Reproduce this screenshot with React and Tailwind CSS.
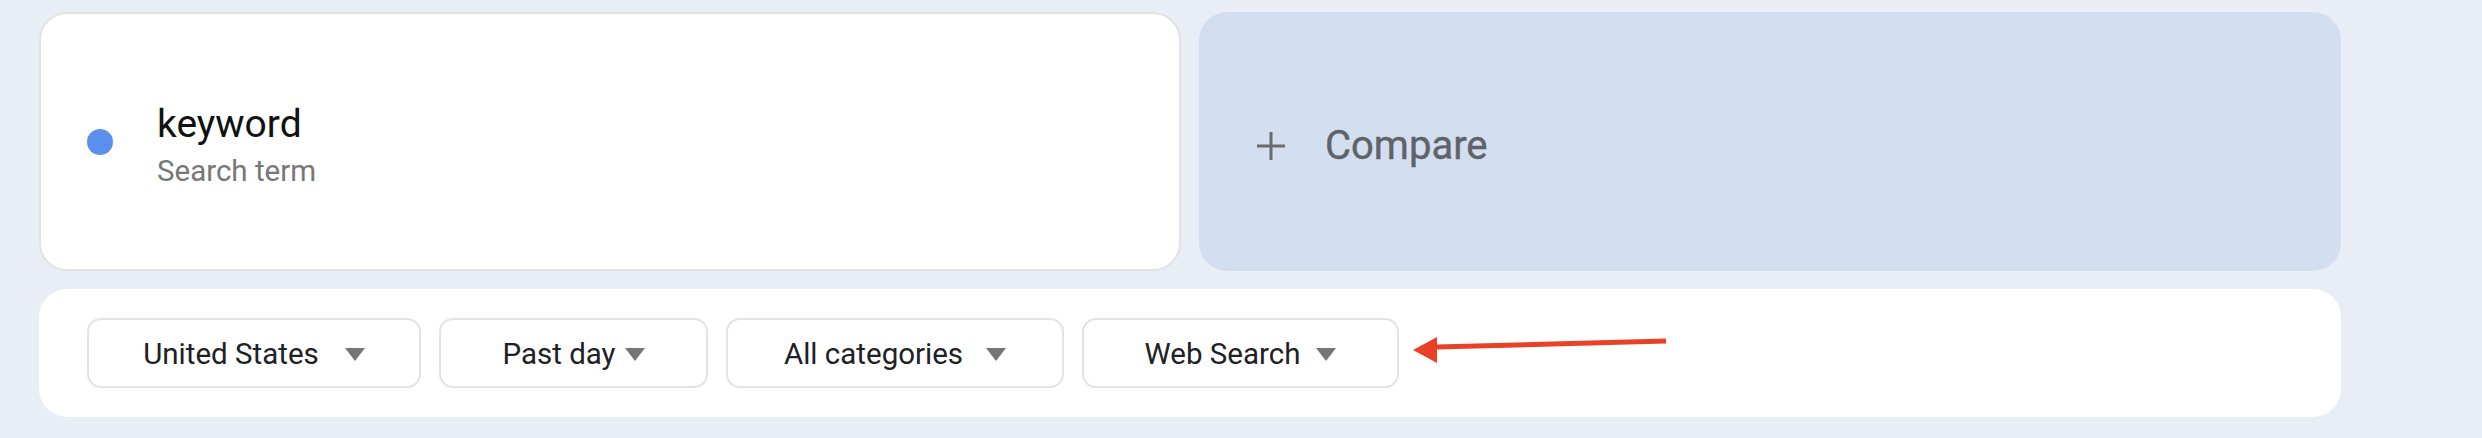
import { useState } from 'react';

const filters = [
  { label: 'United States', width: 'w-[334px]', gap: 'gap-[26px]' },
  { label: 'Past day', width: 'w-[269px]', gap: 'gap-[9px]' },
  { label: 'All categories', width: 'w-[338px]', gap: 'gap-[23px]' },
  { label: 'Web Search', width: 'w-[317px]', gap: 'gap-[16px]' },
];

function Caret() {
  return (
    <svg width="20" height="13" viewBox="0 0 20 13" className="flex-none">
      <path d="M0 0 H20 L10 13 Z" fill="#757575" />
    </svg>
  );
}

function FilterButton({ label, width, gap }) {
  return (
    <button
      className={`flex h-[70px] ${width} ${gap} items-center justify-center rounded-[14px] border-2 border-[#e3e3e3] bg-white pt-[3px] text-[29.5px] text-[#202124]`}
    >
      <span>{label}</span>
      <Caret />
    </button>
  );
}

export default function App() {
  const [term] = useState('keyword');

  return (
    <div className="min-h-[438px] w-full bg-[#e9edf6] font-['Roboto',sans-serif]">
      <div className="ml-[39px] flex w-[2302px] flex-col gap-[18px] pt-[12px]">
        {/* term + compare */}
        <div className="grid h-[259px] grid-cols-2 gap-[18px]">
          <div className="flex items-center gap-[44px] rounded-[28px] border-2 border-[#e2e2e2] bg-white pl-[46px]">
            <span className="h-[26px] w-[26px] flex-none rounded-full bg-[#5a8fee]" />
            <div className="flex flex-col pt-[6px]">
              <span className="text-[39px] leading-[46px] text-[#111]">{term}</span>
              <span className="mt-[6px] text-[29.5px] leading-[36px] text-[#777]">Search term</span>
            </div>
          </div>
          <div className="flex items-center gap-[40px] rounded-[28px] bg-[#d3dff0] pl-[58px] pt-[8px]">
            <svg width="28" height="28" viewBox="0 0 28 28" className="flex-none">
              <path d="M14 0 V28 M0 14 H28" stroke="#6a6a6a" strokeWidth="3" />
            </svg>
            <span className="text-[40px] text-[#5f6368] [-webkit-text-stroke:0.4px_#5f6368]">Compare</span>
          </div>
        </div>

        {/* filters */}
        <div className="relative flex h-[128px] items-center gap-[18px] rounded-[28px] bg-white pl-[48px]">
          {filters.map((f) => (
            <FilterButton key={f.label} {...f} />
          ))}
          <svg
            width="260"
            height="30"
            viewBox="0 0 260 30"
            className="absolute left-[1373px] top-[46px]"
          >
            <path d="M24 12 L254 6" stroke="#e84128" strokeWidth="5" />
            <path d="M1 15 L25 2 L25 28 Z" fill="#e84128" />
          </svg>
        </div>
      </div>
    </div>
  );
}
